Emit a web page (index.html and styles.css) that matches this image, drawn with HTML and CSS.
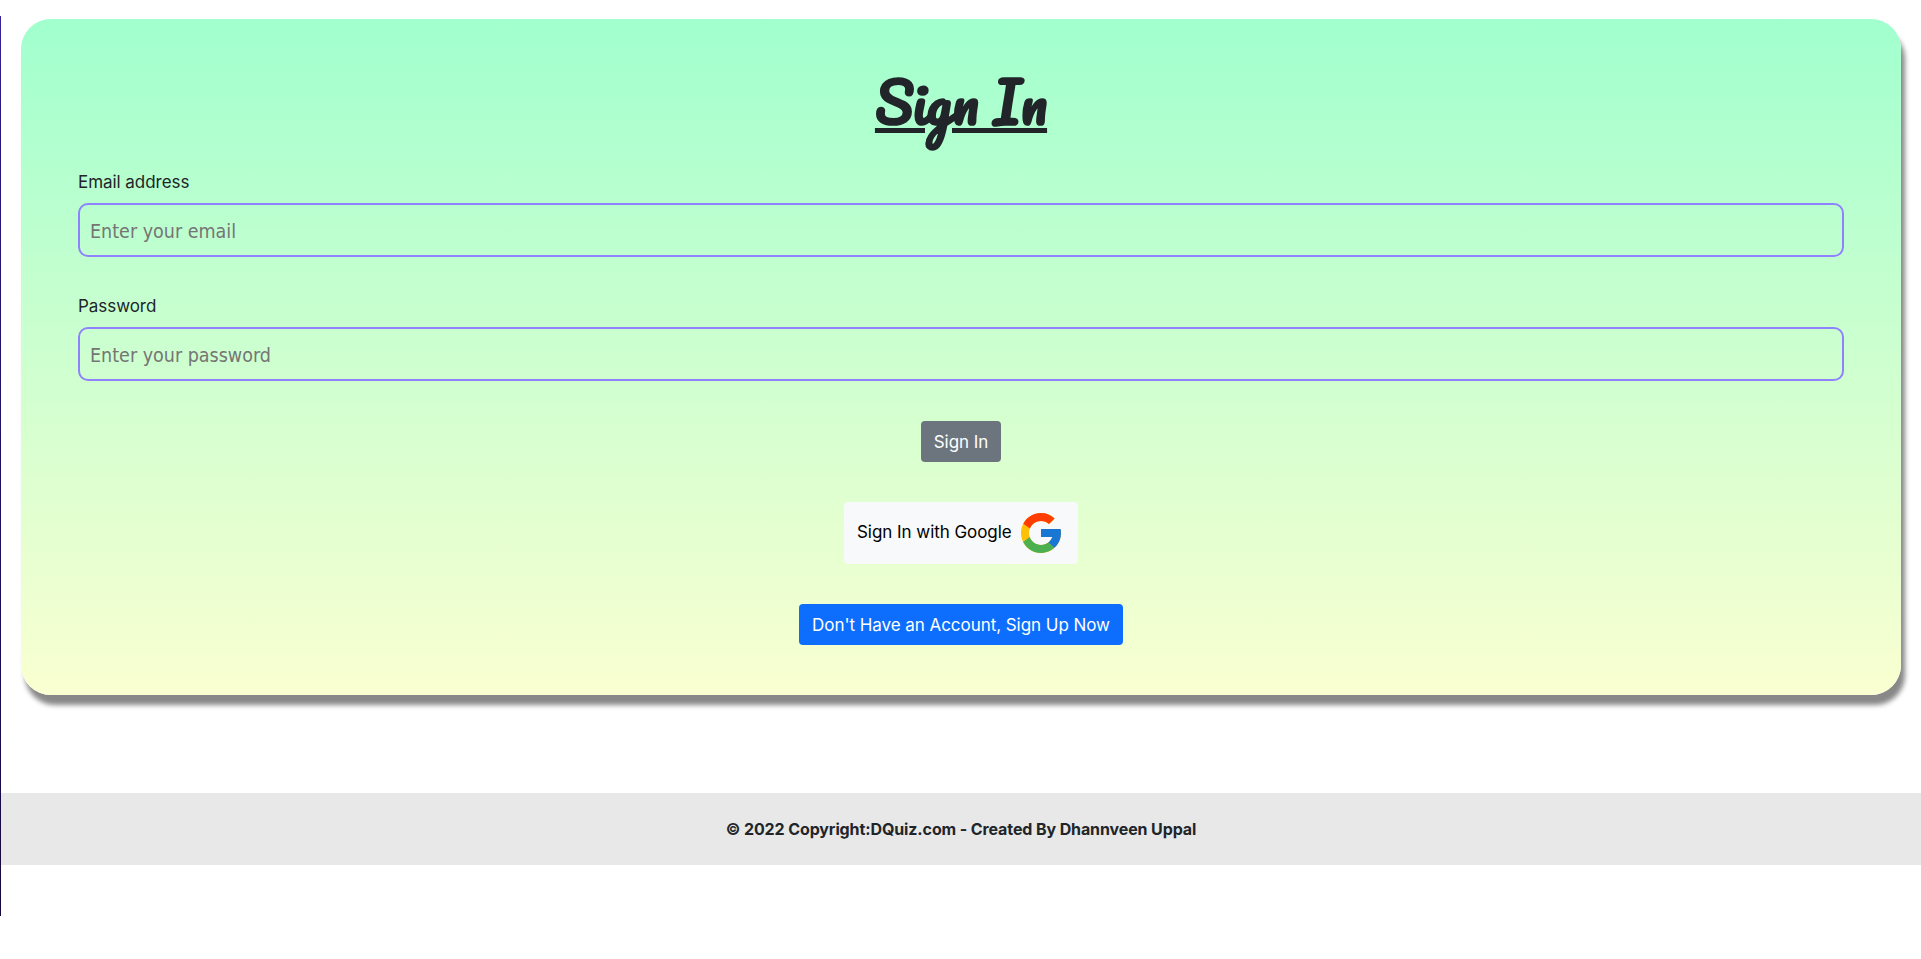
FILE: index.html
```
<!DOCTYPE html>
<html lang="en">
  <head>
    <meta charset="UTF-8" />
    <meta name="viewport" content="width=device-width, initial-scale=1.0" />
    <title>DQuiz</title>
    <link rel="stylesheet" href="styles.css">
  </head>
  <body>
    <div class="page">
      <div class="signin-card">
        <h1 class="title">Sign In</h1>
        <form class="signin-form">
          <div class="form-group">
            <label for="email">Email address</label>
            <input type="email" id="email" placeholder="Enter your email" />
          </div>
          <div class="form-group">
            <label for="password">Password</label>
            <input type="password" id="password" placeholder="Enter your password" />
          </div>
          <button type="submit" class="btn btn-secondary">Sign In</button>
          <button type="button" class="btn btn-light">
            <span>Sign In with Google</span>
            <svg width="48" height="48" viewBox="0 0 48 48">
              <path fill="#FFC107" d="M43.611,20.083H42V20H24v8h11.303c-1.649,4.657-6.08,8-11.303,8c-6.627,0-12-5.373-12-12s5.373-12,12-12c3.059,0,5.842,1.154,7.961,3.039l5.657-5.657C34.046,6.053,29.268,4,24,4C12.955,4,4,12.955,4,24s8.955,20,20,20s20-8.955,20-20C44,22.659,43.862,21.35,43.611,20.083z" />
              <path fill="#FF3D00" d="M6.306,14.691l6.571,4.819C14.655,15.108,18.961,12,24,12c3.059,0,5.842,1.154,7.961,3.039l5.657-5.657C34.046,6.053,29.268,4,24,4C16.318,4,9.656,8.337,6.306,14.691z" />
              <path fill="#4CAF50" d="M24,44c5.166,0,9.86-1.977,13.409-5.192l-6.19-5.238C29.211,35.091,26.715,36,24,36c-5.202,0-9.619-3.317-11.283-7.946l-6.522,5.025C9.505,39.556,16.227,44,24,44z" />
              <path fill="#1976D2" d="M43.611,20.083H42V20H24v8h11.303c-0.792,2.237-2.231,4.166-4.087,5.571l6.19,5.238C36.971,39.205,44,34,44,24C44,22.659,43.862,21.35,43.611,20.083z" />
            </svg>
          </button>
          <button type="button" class="btn btn-primary">Don't Have an Account, Sign Up Now</button>
        </form>
      </div>
      <footer class="footer">© 2022 Copyright:DQuiz.com - Created By Dhannveen Uppal</footer>
    </div>
  </body>
</html>
```

FILE: styles.css
```
* {
  box-sizing: border-box;
}
body {
  margin: 0;
  padding-top: 16px;
  background: #fff;
  color: #212529;
  font-family: Inter, "Liberation Sans", sans-serif;
  font-size: 17px;
}
.page {
  height: 900px;
  padding: 3px 0 0 1px;
  background: linear-gradient(#35269b, #28187f 12%, #1b0b4f 80%, #16083f) left / 1px 100% no-repeat;
}
.signin-card {
  height: 676px;
  margin: 0 20px;
  padding: 45px 57px 0;
  border-radius: 30px;
  background: linear-gradient(#a1ffce, #faffd1);
  box-shadow: 4px 10px 5px #888;
}
.title {
  height: 86px;
  margin: 0;
  font-family: Pacifico, Lato, sans-serif;
  font-size: 55px;
  font-weight: 700;
  line-height: 76px;
  text-align: center;
  text-decoration: underline;
  text-decoration-thickness: 5px;
  text-underline-offset: 3px;
}
.signin-form {
  display: flex;
  flex-direction: column;
  align-items: center;
  padding-top: 17px;
}
.form-group {
  width: 100%;
  margin-bottom: 34px;
}
.form-group + .btn {
  margin-top: 6px;
}
label {
  display: block;
  height: 36px;
  line-height: 30px;
  letter-spacing: -0.05px;
}
input {
  display: block;
  width: 100%;
  height: 54px;
  padding: 2px 10px 0;
  border: 2px solid #9082ff;
  border-radius: 10px;
  background: transparent;
  font-family: Tahoma, "DejaVu Sans Condensed", "Noto Sans", sans-serif;
  font-size: 19.5px;
}
input::placeholder {
  color: #757575;
}
.btn {
  display: flex;
  align-items: center;
  justify-content: center;
  height: 41px;
  margin-bottom: 40px;
  padding: 0;
  border: none;
  border-radius: 4px;
  font-family: inherit;
  font-size: 17px;
  letter-spacing: -0.05px;
  cursor: pointer;
}
.btn-secondary {
  width: 80px;
  background: #6c757d;
  color: #fff;
}
.btn-light {
  width: 234px;
  height: 62px;
  justify-content: space-between;
  padding: 0 13px;
  background: #f8f9fa;
  color: #000;
}
.btn-light span {
  padding-bottom: 2px;
}
.btn-primary {
  width: 324px;
  background: #0d6efd;
  color: #fff;
}
.footer {
  height: 72px;
  margin-top: 98px;
  background: #e8e8e8;
  font-size: 16px;
  font-weight: 700;
  line-height: 72px;
  letter-spacing: -0.11px;
  text-align: center;
}
```
